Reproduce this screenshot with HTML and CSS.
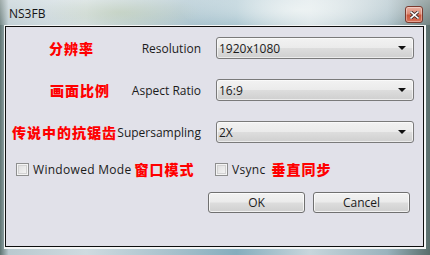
FILE: index.html
```html
<!DOCTYPE html>
<html lang="en">

<head>
  <meta charset="UTF-8" />
  <title>NS3FB</title>
  <link rel="stylesheet" href="styles.css">
</head>

<body>
  <div class="window">
    <div class="titlebar">
      <span class="title">NS3FB</span>
      <button class="close" aria-label="Close">
        <svg width="9" height="8" viewBox="0 0 9 8">
          <path d="M1 1 L8 7 M8 1 L1 7" stroke="#3a2a28" stroke-width="3.2" stroke-linecap="square" />
          <path d="M1 1 L8 7 M8 1 L1 7" stroke="#fff" stroke-width="1.6" stroke-linecap="square" />
        </svg>
      </button>
    </div>

    <div class="frame-inner">
      <div class="client">
        <div class="form-row">
          <div class="label-area">
            <span class="cn cn-res">分辨率</span>
            <span class="en">Resolution</span>
          </div>
          <div class="select"><span>1920x1080</span><i class="arrow"></i></div>
        </div>

        <div class="form-row">
          <div class="label-area">
            <span class="cn cn-aspect">画面比例</span>
            <span class="en">Aspect Ratio</span>
          </div>
          <div class="select"><span>16:9</span><i class="arrow"></i></div>
        </div>

        <div class="form-row">
          <div class="label-area">
            <span class="cn cn-ss">传说中的抗锯齿</span>
            <span class="en">Supersampling</span>
          </div>
          <div class="select"><span>2X</span><i class="arrow"></i></div>
        </div>

        <div class="checks">
          <label class="check-group first">
            <span class="box"></span>
            <span class="en">Windowed Mode</span>
            <span class="cn">窗口模式</span>
          </label>
          <label class="check-group">
            <span class="box"></span>
            <span class="en">Vsync</span>
            <span class="cn cn-vsync">垂直同步</span>
          </label>
        </div>

        <div class="buttons">
          <button class="btn">OK</button>
          <button class="btn">Cancel</button>
        </div>
      </div>
    </div>
  </div>
</body>

</html>
```

FILE: styles.css
```css
* {
  margin: 0;
  padding: 0;
  box-sizing: border-box;
}

html,
body {
  width: 430px;
  height: 255px;
  overflow: hidden;
  font-family: 'Open Sans', 'Noto Sans', sans-serif;
  font-size: 12px;
  color: #1b1b1b;
}

.window {
  width: 430px;
  height: 255px;
  padding: 0 4px 6px 4px;
  display: flex;
  flex-direction: column;
  background:
    radial-gradient(ellipse 120px 30px at 300px 10px, rgba(235, 242, 242, 0.85), transparent),
    radial-gradient(ellipse 80px 20px at 120px 12px, rgba(160, 180, 130, 0.45), transparent),
    linear-gradient(to right, #5f7472 0, #b9c9cf 2%, #cfdbe0 20%, #a8c1cc 40%, #86adbd 55%, #c8d6dc 72%, #9ab3bd 90%, #5a6e6c 100%);
}

.titlebar {
  height: 25px;
  display: flex;
  align-items: center;
  justify-content: space-between;
  background: linear-gradient(to bottom, rgba(255, 255, 255, 0.4), rgba(255, 255, 255, 0.15));
  margin: 0 -4px;
  padding-left: 9px;
  padding-right: 7px;
}

.title {
  font-size: 12px;
  color: #141414;
  margin-top: 1px;
}

.close {
  width: 18px;
  height: 17px;
  margin-top: 4px;
  border: 1px solid #7a3a2e;
  border-radius: 3px;
  background: linear-gradient(to bottom, #eab1a3 0, #dc8a74 45%, #c8553a 55%, #d8735a 100%);
  display: flex;
  align-items: center;
  justify-content: center;
  box-shadow: inset 0 0 0 1px rgba(255, 255, 255, 0.35);
}

.frame-inner {
  flex: 1;
  border: 1px solid #f4f6f6;
  border-right-width: 2px;
  border-bottom-width: 2px;
}

.client {
  height: 100%;
  background: #e1e1e9;
  border: 1px solid #0e0e0e;
  padding: 10px 9px 0 0;
}

.form-row {
  display: flex;
  align-items: center;
  height: 22px;
  margin-bottom: 20px;
}

.label-area {
  width: 195px;
  display: flex;
  align-items: center;
}

.cn {
  font-family: 'Noto Sans CJK SC', sans-serif;
  font-weight: 900;
  font-size: 14px;
  letter-spacing: 1px;
  color: #ff0000;
}

.cn-res {
  margin-left: 43px;
}

.cn-aspect {
  margin-left: 44px;
}

.cn-ss {
  margin-left: 6px;
}

.label-area .en {
  margin-left: auto;
}

.select {
  width: 198px;
  height: 22px;
  margin-left: 15px;
  border: 1px solid #7a7a7a;
  border-radius: 3px;
  background: linear-gradient(to bottom, #f2f2f2 0, #ebebeb 48%, #dddddd 52%, #cfcfcf 100%);
  display: flex;
  align-items: center;
  justify-content: space-between;
  padding: 0 7px 0 2px;
  box-shadow: inset 0 0 0 1px rgba(255, 255, 255, 0.6);
}

.arrow {
  width: 0;
  height: 0;
  border-left: 4px solid transparent;
  border-right: 4px solid transparent;
  border-top: 4px solid #111;
}

.checks {
  display: flex;
  align-items: center;
  height: 16px;
  margin-top: -2px;
}

.check-group {
  display: flex;
  align-items: center;
}

.check-group .en {
  letter-spacing: 0.3px;
}

.check-group.first {
  width: 209px;
  padding-left: 10px;
}

.box {
  width: 13px;
  height: 13px;
  border: 1px solid #8e8f8f;
  background: linear-gradient(135deg, #dcdcdc, #f7f7f7);
  box-shadow: inset 0 0 0 1px #f4f4f4, inset 0 0 0 2px #d2d2d2;
  margin-right: 4px;
}

.check-group .cn {
  margin-left: 3px;
}

.check-group .cn-vsync {
  margin-left: 6px;
}

.buttons {
  display: flex;
  justify-content: flex-end;
  gap: 8px;
  margin-top: 15px;
  padding-right: 4px;
}

.btn {
  width: 97px;
  height: 21px;
  font-family: 'Open Sans', 'Noto Sans', sans-serif;
  font-size: 12px;
  color: #1b1b1b;
  border: 1px solid #707070;
  border-radius: 3px;
  background: linear-gradient(to bottom, #f2f2f2 0, #ebebeb 48%, #dddddd 52%, #cfcfcf 100%);
  box-shadow: inset 0 0 0 1px rgba(255, 255, 255, 0.7);
}
```
